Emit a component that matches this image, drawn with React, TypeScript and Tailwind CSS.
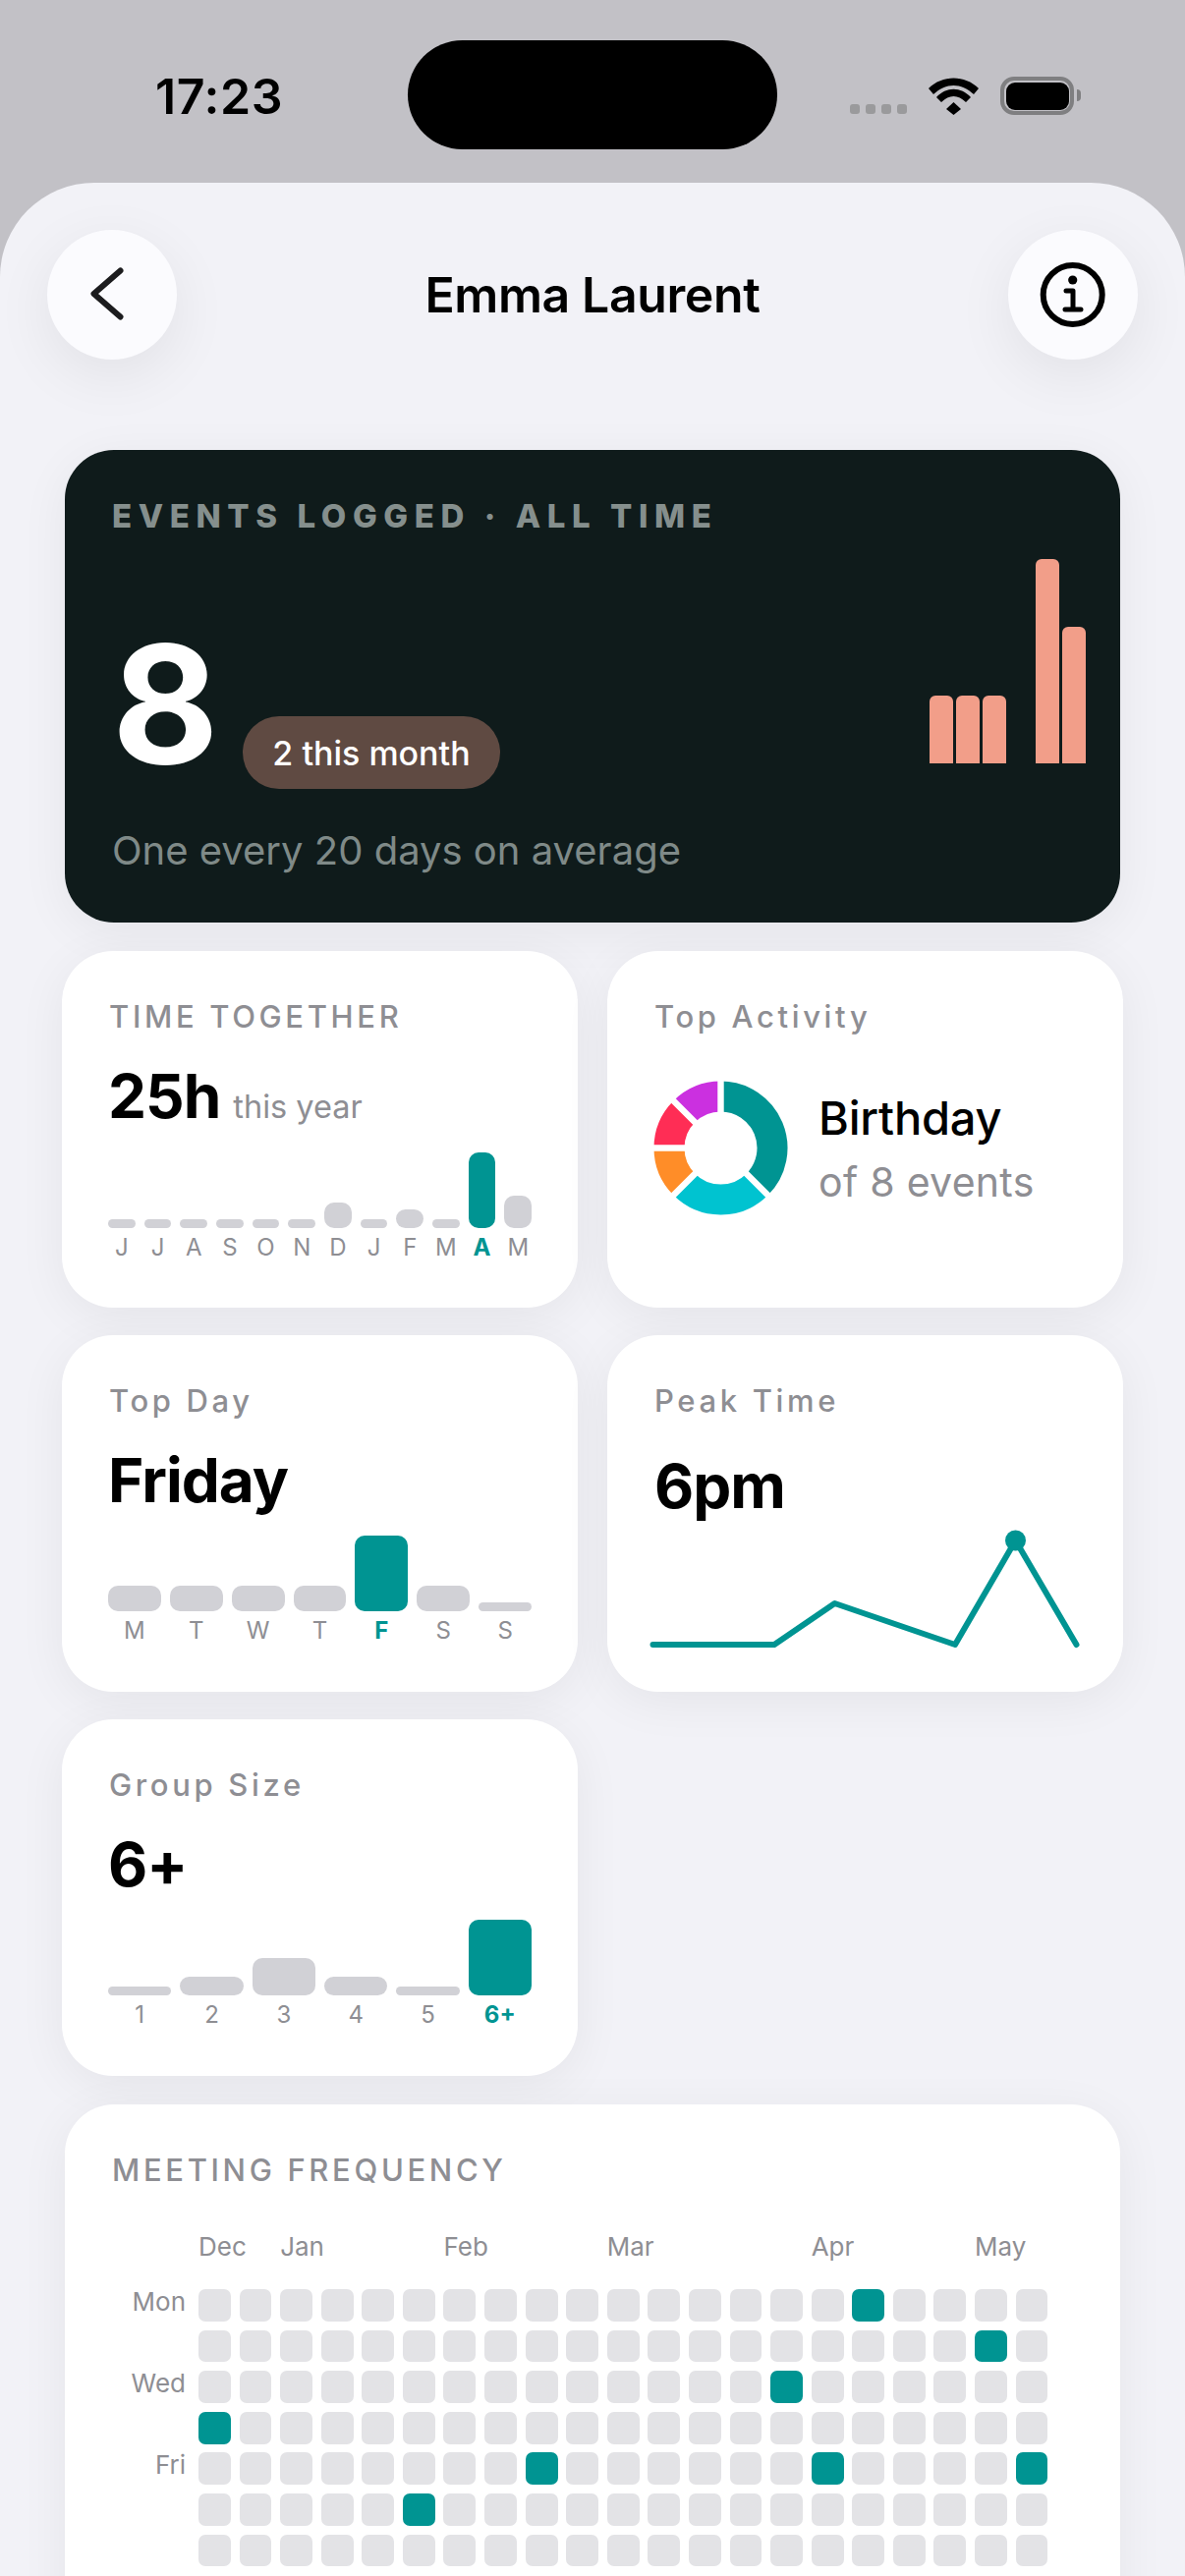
import React from "react";

const TEAL = "#009492";

const cardShadow = "shadow-[0_10px_50px_rgba(0,0,0,0.06)]";

function Label({ children, className = "" }: { children: React.ReactNode; className?: string }) {
  return (
    <div className={`text-[31px] leading-[38px] font-medium tracking-[3.65px] text-[#8e8e93] whitespace-nowrap ${className}`}>
      {children}
    </div>
  );
}

function Bars({ data, labels, active }: { data: number[]; labels: string[]; active: number }) {
  return (
    <div className="mt-[21.5px]">
      <div className="flex items-end gap-[9px] h-[77px] w-[431px] -ml-[1px]">
        {data.map((h, i) => (
          <div
            key={i}
            className={`flex-1 rounded-[10px] ${i === active ? "bg-[#009492]" : "bg-[#d1d1d6]"}`}
            style={{ height: h }}
          />
        ))}
      </div>
      <div className="flex gap-[9px] w-[431px] -ml-[1px] mt-[5px]">
        {labels.map((l, i) => (
          <div
            key={i}
            className={`flex-1 text-center text-[24px] leading-[30px] ${i === active ? "font-bold text-[#009492]" : "text-[#8e8e93]"}`}
          >
            {l}
          </div>
        ))}
      </div>
    </div>
  );
}

function polar(a: number, r: number) {
  const t = ((a - 90) * Math.PI) / 180;
  return `${(r * Math.cos(t)).toFixed(2)} ${(r * Math.sin(t)).toFixed(2)}`;
}

function Donut() {
  const segs = [
    { from: 0, to: 135, color: "#009492" },
    { from: 135, to: 225, color: "#00c3d0" },
    { from: 225, to: 270, color: "#ff8d28" },
    { from: 270, to: 315, color: "#ff2d55" },
    { from: 315, to: 360, color: "#cb30e0" },
  ];
  return (
    <svg width="137" height="137" viewBox="-68.5 -68.5 137 137" className="shrink-0">
      {segs.map((s) => (
        <path
          key={s.from}
          d={`M${polar(s.from, 52.5)} A52.5 52.5 0 0 1 ${polar(s.to, 52.5)}`}
          fill="none"
          stroke={s.color}
          strokeWidth="31"
        />
      ))}
      {segs.map((s) => (
        <path key={s.from} d={`M0 0 L${polar(s.from, 75)}`} stroke="#fff" strokeWidth="6.4" />
      ))}
    </svg>
  );
}

function Card({ children, className = "" }: { children: React.ReactNode; className?: string }) {
  return (
    <div className={`bg-white rounded-[52px] h-[363px] pt-[48px] px-[48px] ${cardShadow} ${className}`}>{children}</div>
  );
}

const months = [
  { name: "Dec", cls: "col-start-1" },
  { name: "Jan", cls: "col-start-3" },
  { name: "Feb", cls: "col-start-7" },
  { name: "Mar", cls: "col-start-11" },
  { name: "Apr", cls: "col-start-16" },
  { name: "May", cls: "col-start-20" },
];

const days = ["Mon", "", "Wed", "", "Fri", "", ""];

const met: Record<number, number[]> = {
  0: [16],
  1: [19],
  2: [14],
  3: [0],
  4: [8, 15, 20],
  5: [5],
  6: [],
};

export default function App() {
  return (
    <div className="w-[1206px] h-[2622px] overflow-hidden bg-[#c2c1c6] font-['Inter',sans-serif] text-black">
      {/* status bar */}
      <div className="h-[186px] flex items-start pt-[41px] pl-[158px]">
        <div className="w-[257px] mt-[29px] text-[50px] leading-[56px] font-semibold tracking-[0.6px]">17:23</div>
        <div className="w-[376px] h-[111px] rounded-[56px] bg-black" />
        <div className="ml-[74px] mt-[37px] flex items-start">
          <div className="flex gap-[6px] mt-[28px]">
            <div className="w-[10px] h-[10px] rounded-[3px] bg-[#9a9a9c]" />
            <div className="w-[10px] h-[10px] rounded-[3px] bg-[#9a9a9c]" />
            <div className="w-[10px] h-[10px] rounded-[3px] bg-[#9a9a9c]" />
            <div className="w-[10px] h-[10px] rounded-[3px] bg-[#9a9a9c]" />
          </div>
          <svg width="51" height="38" viewBox="0 0 51 38" className="ml-[22px] mt-[1px]">
            <path d="M0 11C14-3 37-3 51 11L46 17C33 5 18 5 5 17Z" fill="#000" />
            <path d="M8 20C18 9 33 9 43 20L38 25C30 17 21 17 13 25Z" fill="#000" />
            <path d="M25.5 25L33 32L25.5 38L18 32Z" fill="#000" />
          </svg>
          <div className="ml-[22px] w-[75px] h-[39px] rounded-[14px] border-[4.5px] border-[#7f7f81] p-[1.5px]">
            <div className="w-full h-full rounded-[9px] bg-black" />
          </div>
          <div className="w-[4px] h-[12px] mt-[13px] ml-[3px] rounded-r-[4px] bg-[#7f7f81]" />
        </div>
      </div>

      {/* sheet */}
      <div className="h-[2436px] rounded-t-[96px] bg-[#f2f2f7] pt-[48px]">
        <div className="flex items-center justify-between px-[48px]">
          <div className="w-[132px] h-[132px] rounded-full bg-[#fbfbfe] flex items-center justify-center shadow-[0_16px_60px_rgba(0,0,0,0.07)]">
            <svg width="132" height="132" viewBox="0 0 132 132">
              <path d="M74.5 41.5L47.5 65L74.5 88.5" fill="none" stroke="#1c1c1e" strokeWidth="6" strokeLinecap="round" strokeLinejoin="round" />
            </svg>
          </div>
          <div className="text-[50px] leading-[132px] font-semibold tracking-[-0.4px]">Emma Laurent</div>
          <div className="w-[132px] h-[132px] rounded-full bg-[#fbfbfe] flex items-center justify-center shadow-[0_16px_60px_rgba(0,0,0,0.07)]">
            <svg width="132" height="132" viewBox="0 0 132 132">
              <circle cx="65.7" cy="66" r="30" fill="none" stroke="#000" strokeWidth="6" />
              <circle cx="65.7" cy="51" r="4.6" fill="#000" />
              <path d="M59 62H66V81M58 81H74" fill="none" stroke="#000" strokeWidth="5" strokeLinecap="round" strokeLinejoin="round" />
            </svg>
          </div>
        </div>

        <div className="mt-[92px] px-[63px] flex flex-col">
          {/* hero */}
          <div className={`mx-[3px] h-[481px] rounded-[50px] bg-[#0f1b1b] pt-[47px] pl-[48px] pr-[35px] ${cardShadow}`}>
            <div className="text-[33px] leading-[40px] font-extrabold tracking-[6.6px] text-[#858f8d] whitespace-nowrap">
              EVENTS LOGGED · ALL TIME
            </div>
            <div className="mt-[24px] h-[234px] flex items-end justify-between">
              <div className="flex items-end">
                <div className="w-[133px] mb-[5px] text-[167px] leading-[164px] font-bold text-white">8</div>
                <div className="h-[74px] w-[262px] rounded-full bg-[#5f4a42] flex items-center justify-center text-[34px] font-medium text-white">
                  2 this month
                </div>
              </div>
              <div className="flex items-end gap-[3px] mb-[26px]">
                {[69, 69, 69, 0, 208, 139].map((h, i) => (
                  <div key={i} className="w-[24px] rounded-t-[6px] bg-[#f29e89]" style={{ height: h }} />
                ))}
              </div>
            </div>
            <div className="mt-[38.5px] text-[40px] leading-[48px] text-[#7f8a88]">One every 20 days on average</div>
          </div>

          {/* stat cards */}
          <div className="mt-[29px] grid grid-cols-[525px_525px] gap-x-[30px] gap-y-[28px]">
            <Card>
              <Label>TIME TOGETHER</Label>
              <div className="mt-[26.5px] -ml-[1px] flex items-baseline">
                <div className="text-[62px] leading-[70px] font-bold tracking-[-1px]">25h</div>
                <div className="ml-[13px] text-[32.5px] text-[#8e8e93]">this year</div>
              </div>
              <Bars
                data={[9, 9, 9, 9, 9, 9, 26, 9, 19, 9, 77, 33]}
                labels={["J", "J", "A", "S", "O", "N", "D", "J", "F", "M", "A", "M"]}
                active={10}
              />
            </Card>

            <Card>
              <Label>Top Activity</Label>
              <div className="mt-[46px] -ml-[1px] flex items-center gap-[31px]">
                <Donut />
                <div>
                  <div className="text-[47px] leading-[60px] font-medium tracking-[-0.2px]">Birthday</div>
                  <div className="mt-[9px] text-[41px] leading-[52px] tracking-[0.3px] text-[#8e8e93]">of 8 events</div>
                </div>
              </div>
            </Card>

            <Card>
              <Label>Top Day</Label>
              <div className="mt-[26.5px] -ml-[1px] text-[62px] leading-[70px] font-bold tracking-[-1px]">Friday</div>
              <Bars
                data={[26, 26, 26, 26, 77, 26, 9]}
                labels={["M", "T", "W", "T", "F", "S", "S"]}
                active={4}
              />
            </Card>

            <Card>
              <Label>Peak Time</Label>
              <div className="mt-[32.5px] text-[62px] leading-[70px] font-bold tracking-[-1px]">6pm</div>
              <svg width="448" height="130" viewBox="0 0 448 130" className="mt-[7.5px] -ml-[8px]">
                <path
                  d="M6.5 119H130L191.5 77L314 119L375.5 13L437.5 119"
                  fill="none"
                  stroke={TEAL}
                  strokeWidth="6"
                  strokeLinecap="round"
                  strokeLinejoin="round"
                />
                <circle cx="375.5" cy="13" r="10.5" fill={TEAL} />
              </svg>
            </Card>

            <Card>
              <Label>Group Size</Label>
              <div className="mt-[26.5px] -ml-[1px] text-[62px] leading-[70px] font-bold tracking-[-1px]">6+</div>
              <Bars data={[9, 19, 38.5, 19, 9, 77]} labels={["1", "2", "3", "4", "5", "6+"]} active={5} />
            </Card>
          </div>

          {/* heatmap */}
          <div className={`mx-[3px] mt-[29px] h-[600px] rounded-[50px] bg-white pt-[48px] pl-[48px] ${cardShadow}`}>
            <Label>MEETING FREQUENCY</Label>
            <div className="mt-[42.5px] pl-[88px] grid grid-cols-[repeat(21,32.9px)] gap-x-[8.7px]">
              {months.map((m) => (
                <div key={m.name} className={`${m.cls} row-start-1 text-[26px] leading-[32px] text-[#8e8e93] whitespace-nowrap`}>
                  {m.name}
                </div>
              ))}
            </div>
            <div className="mt-[27.5px] flex flex-col gap-[8.8px]">
              {days.map((d, r) => (
                <div key={r} className="flex h-[32.8px]">
                  <div className="w-[88px] pr-[13px] text-right text-[26px] leading-[25px] text-[#8e8e93]">{d}</div>
                  <div className="flex gap-[8.7px]">
                    {Array.from({ length: 21 }).map((_, c) => (
                      <div
                        key={c}
                        className={`w-[32.9px] h-[32.8px] rounded-[7px] ${met[r].includes(c) ? "bg-[#009492]" : "bg-[#e3e3e6]"}`}
                      />
                    ))}
                  </div>
                </div>
              ))}
            </div>
          </div>
        </div>
      </div>
    </div>
  );
}
